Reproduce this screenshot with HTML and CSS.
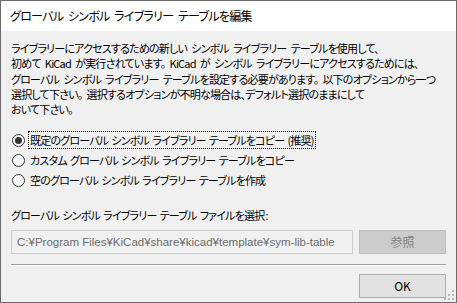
FILE: index.html
```html
<!DOCTYPE html>
<html lang="ja">
<head>
    <meta charset="UTF-8">
    <title>グローバル シンボル ライブラリー テーブルを編集</title>
    <link rel="stylesheet" href="styles.css">
</head>
<body>

    <!-- Ventana de diálogo -->
    <div class="window">
        <div class="titlebar">グローバル シンボル ライブラリー テーブルを編集</div>

        <div class="content">
            <p class="intro">
                ライブラリーにアクセスするための新しい シンボル ライブラリー テーブルを使用して、<br>
                初めて KiCad が実行されています。 KiCad が シンボル ライブラリーにアクセスするためには、<br>
                グローバル シンボル ライブラリー テーブルを設定する必要があります。 以下のオプションから一つ<br>
                選択して下さい。 選択するオプションが不明な場合は、デフォルト選択のままにして<br>
                おいて下さい。
            </p>

            <!-- Opciones -->
            <div class="options">
                <label class="option">
                    <span class="radio checked"></span>
                    <span class="option-text focused">既定のグローバル シンボル ライブラリー テーブルをコピー (推奨)</span>
                </label>
                <label class="option">
                    <span class="radio"></span>
                    <span class="option-text">カスタム グローバル シンボル ライブラリー テーブルをコピー</span>
                </label>
                <label class="option">
                    <span class="radio"></span>
                    <span class="option-text">空のグローバル シンボル ライブラリー テーブルを作成</span>
                </label>
            </div>

            <div class="file-label">グローバル シンボル ライブラリー テーブル ファイルを選択<span class="colon">:</span></div>
            <div class="file-row">
                <div class="file-input">C:¥Program Files¥KiCad¥share¥kicad¥template¥sym-lib-table</div>
                <div class="btn disabled">参照</div>
            </div>

            <div class="separator"></div>

            <div class="footer">
                <div class="btn">OK</div>
            </div>
        </div>

        <!-- Agarre de redimensionado -->
        <svg class="grip" width="11" height="11" viewBox="0 0 11 11">
            <rect x="8" y="0" width="2" height="2" fill="#b8b8b8"/>
            <rect x="4" y="4" width="2" height="2" fill="#b8b8b8"/>
            <rect x="8" y="4" width="2" height="2" fill="#b8b8b8"/>
            <rect x="0" y="8" width="2" height="2" fill="#b8b8b8"/>
            <rect x="4" y="8" width="2" height="2" fill="#b8b8b8"/>
            <rect x="8" y="8" width="2" height="2" fill="#b8b8b8"/>
        </svg>
    </div>

</body>
</html>
```

FILE: styles.css
```css
/* Estilos generales */
body {
    margin: 0;
    padding: 0;
    background-color: #6b6b6b;
    font-family: 'Noto Sans CJK JP', 'Noto Sans', sans-serif;
    font-size: 11px;
    letter-spacing: -0.8px;
    word-spacing: 2.5px;
    color: #000000;
}

.window {
    position: relative;
    width: 457px;
    height: 303px;
    box-sizing: border-box;
    border: 1px solid #6b6b6b;
    background-color: #f0f0f0;
    display: flex;
    flex-direction: column;
    font-feature-settings: "palt";
    white-space: nowrap;
    overflow: hidden;
}

/* Barra de título */
.titlebar {
    height: 30px;
    line-height: 29px;
    padding-left: 9px;
    background-color: #ffffff;
    font-size: 12px;
    letter-spacing: -0.7px;
    flex: none;
}

.content {
    flex: 1;
    padding: 10px 10px 0 10px;
    display: flex;
    flex-direction: column;
}

.intro {
    margin: 0;
    line-height: 15.25px;
}

/* Opciones */
.options {
    margin-top: 13px;
    display: flex;
    flex-direction: column;
}

.option {
    display: flex;
    align-items: center;
    height: 20px;
}

.radio {
    width: 11px;
    height: 11px;
    border: 1px solid #333333;
    border-radius: 50%;
    background-color: #ffffff;
    margin-left: 1px;
    margin-right: 3px;
    display: flex;
    align-items: center;
    justify-content: center;
    flex: none;
}

.radio.checked::after {
    content: "";
    width: 7px;
    height: 7px;
    border-radius: 50%;
    background-color: #333333;
}

.option-text {
    border: 1px dotted transparent;
    padding: 0 1px;
    line-height: 16px;
    word-spacing: 1.5px;
}

.option-text.focused {
    border-color: #000000;
}

.file-label {
    margin-top: 17px;
    line-height: 16px;
    word-spacing: 1.5px;
}

.colon {
    font-family: 'Noto Sans', sans-serif;
    letter-spacing: 0;
    margin-left: 1px;
}

.file-row {
    margin-top: 6px;
    display: flex;
    gap: 6px;
}

.file-input {
    width: 342px;
    height: 24px;
    box-sizing: border-box;
    border: 1px solid #cccccc;
    background-color: #f0f0f0;
    color: #6d6d6d;
    padding-left: 5px;
    line-height: 22px;
    font-family: 'Liberation Sans', sans-serif;
    font-size: 11.5px;
    letter-spacing: 0;
    word-spacing: 0;
    font-feature-settings: normal;
    overflow: hidden;
}

/* Botones */
.btn {
    width: 87px;
    height: 24px;
    box-sizing: border-box;
    border: 1px solid #adadad;
    background-color: #e1e1e1;
    text-align: center;
    line-height: 22px;
    font-size: 12px;
    letter-spacing: 0;
}

.btn.disabled {
    background-color: #cccccc;
    border-color: #bfbfbf;
    color: #838383;
}

.separator {
    margin-top: 10px;
    height: 1px;
    background-color: #a0a0a0;
    border-bottom: 1px solid #ffffff;
}

.footer {
    margin-top: 8px;
    display: flex;
    justify-content: flex-end;
}

.grip {
    position: absolute;
    right: 1px;
    bottom: 1px;
}
```
